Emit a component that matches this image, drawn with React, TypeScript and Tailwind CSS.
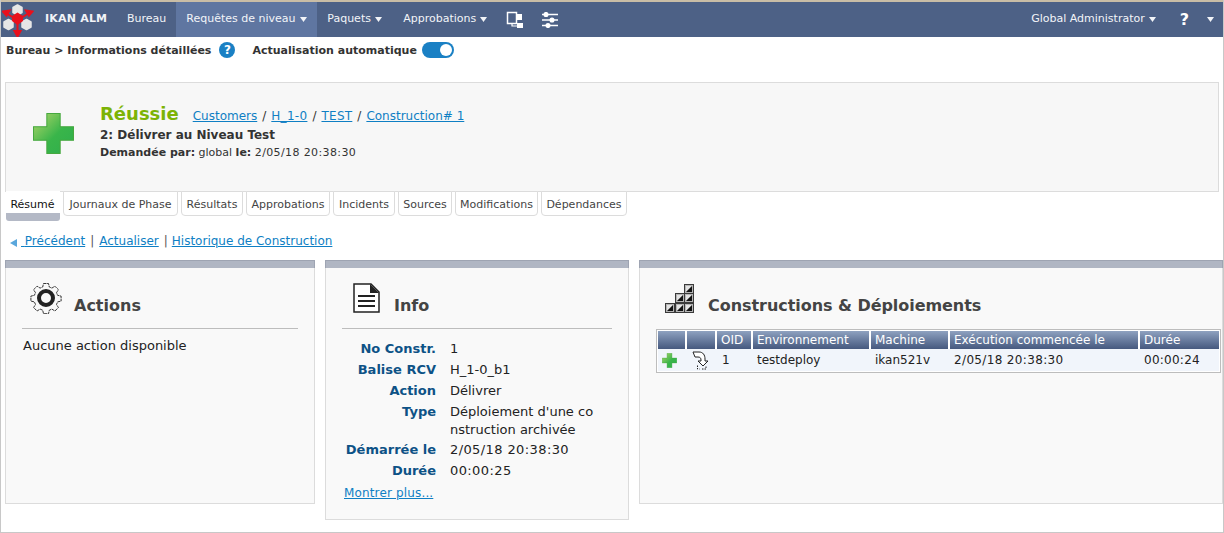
import React from 'react';

const font = '[font-family:"DejaVu_Sans",Verdana,sans-serif]';

const Caret = () => (
  <svg width="7" height="5" viewBox="0 0 7 5" className="ml-[4px] inline-block">
    <path d="M0 0h7L3.5 5z" fill="#f2f4f8" />
  </svg>
);

const PlusIcon = ({ size }: { size: number }) => (
  <svg width={size} height={size} viewBox="0 0 40 40">
    <defs>
      <linearGradient id={`plus${size}`} x1="0" y1="0" x2="1" y2="1">
        <stop offset="0" stopColor="#b5d66a" />
        <stop offset="0.55" stopColor="#39b54a" />
        <stop offset="1" stopColor="#2fae4c" />
      </linearGradient>
    </defs>
    <path d="M13.5.5h13v13h13v13h-13v13h-13v-13H.5v-13h13z" fill={`url(#plus${size})`} stroke="#46a83f" strokeWidth="1" />
  </svg>
);

const Logo = () => (
  <svg width="32" height="34" viewBox="0 0 32 34">
    <g fill="#e6e6e6" stroke="#e6e6e6" strokeWidth="1.500" strokeLinejoin="round">
      <path d="M15.500 2l4.500 2.500v5l-4.500 2.500-4.500-2.500v-5z" />
      <path d="M6.500 16.500l4.500 2.500v5l-4.500 2.500-4.500-2.500v-5z" />
      <path d="M24.500 16.500l4.500 2.500v5l-4.500 2.500-4.500-2.500v-5z" />
    </g>
    <path d="M15.500 9.500l5.500 3.500v5l-5.500 4-5.500-4v-5z" fill="#e8101c" />
    <g fill="#e8101c" stroke="#e8101c" strokeWidth="2">
      <path d="M15.500 20v9" />
      <path d="M12.500 28h6l-3 5.500z" />
      <path d="M19 15l8-5" />
      <path d="M30.500 8.500l-6.500-1 3 5z" />
      <path d="M12 15L4 10" />
      <path d="M1 8.500l6.500-1-3 5z" />
    </g>
  </svg>
);

const NetworkIcon = () => (
  <svg width="20" height="18" viewBox="0 0 20 18" fill="none">
    <rect x="1.500" y="1.500" width="9" height="11" stroke="#fff" strokeWidth="1.500" />
    <rect x="11" y="3" width="5" height="6" fill="#fff" />
    <rect x="11" y="12" width="6" height="5" fill="#fff" />
    <path d="M6 13v2h5" stroke="#fff" strokeWidth="1.200" />
  </svg>
);

const SlidersIcon = () => (
  <svg width="18" height="16" viewBox="0 0 18 16" fill="none" stroke="#fff" strokeWidth="1.500">
    <path d="M1 2.500h16M1 8h16M1 13.500h16" />
    <circle cx="5" cy="2.500" r="1.800" fill="#fff" />
    <circle cx="11" cy="8" r="1.800" fill="#fff" />
    <circle cx="7" cy="13.500" r="1.800" fill="#fff" />
  </svg>
);

const GearIcon = () => (
  <svg width="32" height="32" viewBox="0 0 32 32" fill="none">
    <path
      d="M13.500 1.500h5l.8 3.500 2.600 1.100 3-1.900 3.500 3.500-1.900 3 1.100 2.600 3.500.8v5l-3.500.8-1.100 2.600 1.900 3-3.500 3.500-3-1.900-2.600 1.100-.8 3.500h-5l-.8-3.500-2.600-1.100-3 1.900-3.500-3.500 1.900-3-1.100-2.600-3.500-.8v-5l3.500-.8 1.100-2.600-1.900-3 3.500-3.500 3 1.900 2.600-1.100z"
      stroke="#222"
      strokeWidth="0.900"
      strokeDasharray="3 0.600"
    />
    <circle cx="16" cy="16" r="7" stroke="#222" strokeWidth="4" />
  </svg>
);

const DocIcon = () => (
  <svg width="27" height="30" viewBox="0 0 27 30" fill="none">
    <path d="M1 1h17l8 8v20H1z" fill="#fff" stroke="#222" strokeWidth="1.500" />
    <path d="M17 1l9 9h-9z" fill="#222" />
    <path d="M5 13h17M5 18h17M5 23h17" stroke="#222" strokeWidth="1.800" />
  </svg>
);

const StairCell = ({ x, y }: { x: number; y: number }) => (
  <g transform={`translate(${x} ${y})`}>
    <rect x="0.500" y="0.500" width="9" height="9" fill="#b5b5b5" stroke="#3a3a3a" />
    <path d="M2 8V2h6z" fill="#e4e4e4" />
    <path d="M8 2v6H2z" fill="#111" />
  </g>
);

const StairsIcon = () => (
  <svg width="30" height="29" viewBox="0 0 30 29">
    <StairCell x={19} y={0} />
    <StairCell x={10} y={9} />
    <StairCell x={19} y={9} />
    <StairCell x={0} y={19} />
    <StairCell x={10} y={19} />
    <StairCell x={19} y={19} />
  </svg>
);

const DeployIcon = () => (
  <svg width="18" height="19" viewBox="0 0 18 19" fill="none" stroke="#222" strokeWidth="1">
    <path d="M1 1h6c4 0 6 3 6 7v2h3l-5 5-5-5h3V9c0-2-1-3-3-3H3z" fill="#fff" />
    <path d="M5.500 14.500v3.500h2M10 18h4v-3.500" strokeDasharray="1.500 1" />
  </svg>
);

const tabs = [
  { label: 'Journaux de Phase', w: 'w-[115px]' },
  { label: 'Résultats', w: 'w-[62px]' },
  { label: 'Approbations', w: 'w-[84px]' },
  { label: 'Incidents', w: 'w-[62px]' },
  { label: 'Sources', w: 'w-[54px]' },
  { label: 'Modifications', w: 'w-[83px]' },
  { label: 'Dépendances', w: 'w-[86px]' },
];

const info = [
  ['No Constr.', '1'],
  ['Balise RCV', 'H_1-0_b1'],
  ['Action', 'Délivrer'],
  ['Type', "Déploiement d'une co\nnstruction archivée"],
  ['Démarrée le', '2/05/18 20:38:30'],
  ['Durée', '00:00:25'],
];

const link = 'text-[#0f7fc4] underline';
const th = 'h-[18px] border-r-2 border-white bg-gradient-to-b from-[#8fa2c0] to-[#46597f] pl-[4px] text-left font-normal text-white last:border-r-0';

function Panel({ className, children }: { className: string; children: React.ReactNode }) {
  return (
    <section className={`border border-[#dcdcdc] bg-[#f9f9f9] ${className}`}>
      <div className="-m-px mb-0 h-[8px] bg-[#b0b6c3] border-t border-x border-[#9ea4b2]" />
      {children}
    </section>
  );
}

export default function App() {
  return (
    <div className={`h-[533px] w-[1224px] overflow-hidden border-x border-b border-[#c8c8c8] bg-white text-[11px] text-[#333] ${font}`}>
      <div className="h-[2px] -mx-px bg-[#c9bda6]" />

      {/* Top navigation */}
      <nav className="flex h-[35px] items-center whitespace-nowrap bg-[#4d6186] text-[#f2f4f8]">
        <div className="flex w-[44px] pl-[1px]">
          <Logo />
        </div>
        <span className="w-[72px] font-bold tracking-[0.2px]">IKAN ALM</span>
        <span className="px-[10px]">Bureau</span>
        <span className="flex h-full w-[141px] items-center bg-[#5f76a1] px-[10px]">
          Requêtes de niveau
          <Caret />
        </span>
        <span className="w-[76px] px-[10px]">
          Paquets
          <Caret />
        </span>
        <span className="px-[10px]">
          Approbations
          <Caret />
        </span>
        <span className="ml-[9px] mr-[15px]">
          <NetworkIcon />
        </span>
        <SlidersIcon />
        <span className="ml-auto">
          Global Administrator
          <Caret />
        </span>
        <span className="ml-[24px] text-[16px] leading-none font-bold text-white">?</span>
        <span className="ml-[14px] mr-[9px] flex">
          <Caret />
        </span>
      </nav>

      {/* Breadcrumb */}
      <div className="flex h-[26px] items-center pl-[5px] font-bold text-[#333]">
        <span className="mt-[2px]">Bureau &gt; Informations détaillées</span>
        <span className="ml-[8px] flex h-[16px] w-[16px] items-center justify-center rounded-full bg-[#1a80c4] text-[12px] text-white">?</span>
        <span className="ml-[17px] mt-[2px]">Actualisation automatique</span>
        <span className="ml-[5px] flex h-[16px] w-[32px] items-center justify-end rounded-full bg-[#1a80c4] pr-[2px]">
          <span className="h-[12px] w-[12px] rounded-full bg-white" />
        </span>
      </div>

      {/* Result header */}
      <header className="mx-[4px] mt-[19px] flex h-[110px] border border-[#dcdcdc] bg-[#f7f7f7]">
        <div className="ml-[27px] mt-[30px]">
          <PlusIcon size={41} />
        </div>
        <div className="ml-[26px] mt-[19px]">
          <div className="flex items-baseline">
            <span className="text-[18px] leading-[24px] font-bold text-[#7cb305]">Réussie</span>
            <span className="ml-[14px] text-[12px]">
              <a className={link}>Customers</a>
              <span className="mx-[5px]">/</span>
              <a className={`${link} tracking-[0.3px]`}>H_1-0</a>
              <span className="mx-[5px]">/</span>
              <a className={`${link} tracking-[0.25px]`}>TEST</a>
              <span className="mx-[5px]">/</span>
              <a className={link}>Construction# 1</a>
            </span>
          </div>
          <div className="mt-[1px] text-[12px] leading-[16px] font-bold text-[#333]">2: Délivrer au Niveau Test</div>
          <div className="mt-[2px] leading-[16px]">
            <b>Demandée par:</b> global <b>le:</b> <span className="tracking-[0.38px]">2/05/18 20:38:30</span>
          </div>
        </div>
      </header>

      {/* Tabs */}
      <div className="-mt-px ml-[5px] flex gap-[3px] text-center">
        <div className="h-[30px] w-[54px] rounded-b-[3px] border-b-[8px] border-[#b4b9c6] bg-white pt-[6px] pr-[1px] text-[#111]">Résumé</div>
        {tabs.map((tab) => (
          <div key={tab.label} className={`h-[25px] ${tab.w} rounded-b-[4px] border border-[#dcdcdc] bg-white pt-[5px] text-[#444]`}>
            {tab.label}
          </div>
        ))}
      </div>

      {/* Action links */}
      <div className="mt-[10px] flex h-[20px] items-center pl-[9px] text-[12px] text-[#0f7fc4]">
        <svg width="7" height="8" viewBox="0 0 7 8" className="mr-[4px] mt-[3px]">
          <path d="M7 0v8L0 4z" fill="#5aa7dc" />
        </svg>
        <a className={link}>{'\u00a0'}Précédent</a>
        <span className="mx-[5px] text-[#555]">|</span>
        <a className={link}>Actualiser</a>
        <span className="ml-[5px] mr-[4px] text-[#555]">|</span>
        <a className={link}>Historique de Construction</a>
      </div>

      {/* Panels */}
      <div className="mt-[9px] flex items-start pl-[4px] text-[12px]">
        <Panel className="h-[244px] w-[310px] shrink-0">
          <div className="mx-[16px] flex h-[61px] border-b border-[#bdbdbd]">
            <span className="ml-[8px] mt-[14px]"><GearIcon /></span>
            <h2 className="ml-[12px] mt-[28px] text-[16px] leading-[20px] font-bold text-[#444]">Actions</h2>
          </div>
          <p className="ml-[17px] mt-[9px] text-[13px] leading-[16px] text-[#222]">Aucune action disponible</p>
        </Panel>

        <Panel className="ml-[10px] h-[260px] w-[304px] shrink-0">
          <div className="mx-[16px] flex h-[61px] border-b border-[#bdbdbd]">
            <span className="ml-[11px] mt-[15px]"><DocIcon /></span>
            <h2 className="ml-[14px] mt-[28px] text-[16px] leading-[20px] font-bold text-[#444]">Info</h2>
          </div>
          <dl className="mt-[11px] grid grid-cols-[110px_1fr] gap-x-[14px] text-[13px] leading-[18px] text-[#222]">
            {info.map(([label, value]) => (
              <React.Fragment key={label}>
                <dt className={`${label === 'Type' ? 'mb-[2px]' : 'mb-[3px]'} text-right font-bold text-[#0d5286]`}>{label}</dt>
                <dd className={`${label === 'Type' ? 'mb-[2px]' : 'mb-[3px]'} whitespace-pre-line ${value[0] === '2' || value[0] === '0' ? 'tracking-[0.4px]' : ''}`}>{value}</dd>
              </React.Fragment>
            ))}
          </dl>
          <a className={`ml-[18px] mt-[1px] block leading-[18px] tracking-[0.15px] ${link}`}>Montrer plus...</a>
        </Panel>

        <Panel className="ml-[10px] h-[244px] min-w-0 flex-1">
          <div className="flex h-[61px]">
            <span className="ml-[25px] mt-[16px]"><StairsIcon /></span>
            <h2 className="ml-[13px] mt-[28px] text-[16px] leading-[20px] font-bold tracking-[-0.05px] text-[#444]">Constructions &amp; Déploiements</h2>
          </div>
          <div className="ml-[16px] w-[565px] border border-[#bdbdbd] bg-white p-px">
            <table className="w-full table-fixed border-separate border-spacing-0 text-[12px]">
              <thead>
                <tr>
                  <th className={`${th} w-[29px]`} />
                  <th className={`${th} w-[30px]`} />
                  <th className={`${th} w-[36px]`}>OID</th>
                  <th className={`${th} w-[118px]`}>Environnement</th>
                  <th className={`${th} w-[79px]`}>Machine</th>
                  <th className={`${th} w-[190px]`}>Exécution commencée le</th>
                  <th className={th}>Durée</th>
                </tr>
              </thead>
              <tbody>
                <tr className="h-[22px] bg-[#f1f5fb] text-[#222]">
                  <td className="pl-[4px]"><span className="flex pt-[1px]"><PlusIcon size={15} /></span></td>
                  <td className="pl-[5px]"><span className="flex"><DeployIcon /></span></td>
                  <td className="pl-[5px]">1</td>
                  <td className="pl-[4px]">testdeploy</td>
                  <td className="pl-[4px]">ikan521v</td>
                  <td className="pl-[4px] tracking-[0.35px]">2/05/18 20:38:30</td>
                  <td className="pl-[4px] tracking-[0.25px]">00:00:24</td>
                </tr>
              </tbody>
            </table>
          </div>
        </Panel>
      </div>
    </div>
  );
}
